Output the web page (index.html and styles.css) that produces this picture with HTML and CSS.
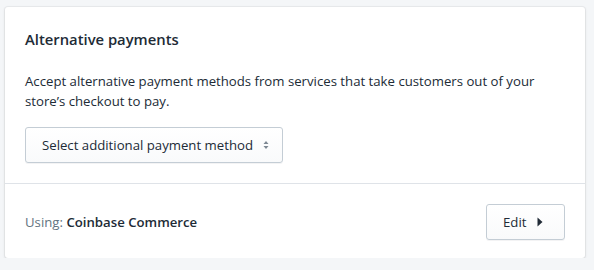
FILE: index.html
```html
<!DOCTYPE html>
<html>
<head>
<meta charset="utf-8">
<link rel="stylesheet" href="styles.css">
</head>
<body>
<div class="card">
  <div class="section">
    <h2 class="title">Alternative payments</h2>
    <p class="desc">Accept alternative payment methods from services that take customers out of your store’s checkout to pay.</p>
    <div class="select">
      <span>Select additional payment method</span>
      <svg class="arrows" width="8" height="12" viewBox="0 0 8 12"><path d="M4 2 L6.5 5 H1.5 Z M4 10 L6.5 7 H1.5 Z" fill="#7d8893"/></svg>
    </div>
  </div>
  <div class="section footer">
    <div class="using"><span class="label">Using:</span> <strong>Coinbase Commerce</strong></div>
    <button class="btn">Edit <svg width="6" height="10" viewBox="0 0 6 10"><path d="M0.5 0.5 L5.5 5 L0.5 9.5 Z" fill="#212b36"/></svg></button>
  </div>
</div>
</body>
</html>
```
FILE: styles.css
```css
html, body {
  margin: 0;
  background: #f4f6f8;
}
body {
  padding: 7px 9px 0 5px;
  font-family: "Open Sans", "Noto Sans", sans-serif;
  color: #212b36;
  font-size: 13.2px;
  line-height: 20px;
}
.card {
  background: #fff;
  border-radius: 3px;
  box-shadow: 0 0 0 1px rgba(63,63,68,0.05), 0 1px 3px 0 rgba(63,63,68,0.15);
  height: 251px;
}
.section {
  padding: 20px;
}
.section + .section {
  border-top: 1px solid #dfe3e8;
}
.title {
  margin: 0;
  font-size: 14.8px;
  font-weight: 600;
  line-height: 24px;
}
.desc {
  margin: 20px 0 16px;
}
.select {
  display: inline-flex;
  align-items: center;
  justify-content: space-between;
  box-sizing: border-box;
  height: 36px;
  width: 258px;
  padding: 0 12px 0 16px;
  border: 1px solid #c4cdd5;
  border-radius: 3px;
  background: linear-gradient(#fff, #f9fafb);
  box-shadow: 0 1px 0 0 rgba(22,29,37,0.05);
  vertical-align: top;
}
.footer {
  display: flex;
  align-items: center;
  justify-content: space-between;
  padding-right: 20px;
}
.label {
  color: #637381;
}
strong {
  font-weight: 600;
}
.btn {
  font: inherit;
  color: #212b36;
  height: 36px;
  width: 79px;
  box-sizing: border-box;
  padding: 0 16px;
  display: inline-flex;
  align-items: center;
  gap: 11px;
  border: 1px solid #c4cdd5;
  border-radius: 3px;
  background: linear-gradient(#fff, #f9fafb);
  box-shadow: 0 1px 0 0 rgba(22,29,37,0.05);
}
```
